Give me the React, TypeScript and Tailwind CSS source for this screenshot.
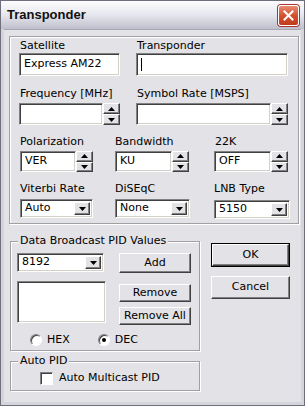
import React from 'react';

const font = { fontFamily: '"DejaVu Sans", Verdana, sans-serif' };

const sunken =
  'bg-white border border-t-[#808080] border-l-[#808080] border-r-white border-b-white shadow-[inset_1px_1px_0_#404040,inset_-1px_-1px_0_#d4d0c8]';
const raised =
  'bg-[#e3e2e6] border border-t-white border-l-white border-r-[#404040] border-b-[#404040] shadow-[inset_-1px_-1px_0_#808080]';
const etched = 'relative border border-[#a0a0a4] shadow-[inset_1px_1px_0_#fff,1px_1px_0_#fff]';

function Arrow({ up }: { up?: boolean }) {
  return (
    <svg width="7" height="4" viewBox="0 0 7 4">
      <polygon points={up ? '3.5,0 7,4 0,4' : '0,0 7,0 3.5,4'} fill="#000" />
    </svg>
  );
}

function Spinner() {
  return (
    <div className="flex flex-col w-[17px]">
      <div className={`${raised} flex-1 flex items-center justify-center`}>
        <Arrow up />
      </div>
      <div className={`${raised} flex-1 flex items-center justify-center`}>
        <Arrow />
      </div>
    </div>
  );
}

function SpinField({ w, h, value }: { w: string; h: string; value?: string }) {
  return (
    <div className={`flex ${h}`}>
      <div className={`${sunken} ${w} flex items-center pl-[4px]`}>{value}</div>
      <Spinner />
    </div>
  );
}

function Select({ w, h, value }: { w: string; h: string; value: string }) {
  return (
    <div className={`${sunken} ${w} ${h} flex items-center justify-between p-[2px] pl-[4px]`}>
      <span>{value}</span>
      <div className={`${raised} w-[16px] h-full flex items-center justify-center`}>
        <Arrow />
      </div>
    </div>
  );
}

function Label({ children, className = '' }: { children: React.ReactNode; className?: string }) {
  return <div className={`leading-[13px] h-[13px] whitespace-nowrap ${className}`}>{children}</div>;
}

function Button({ children, className = '' }: { children: React.ReactNode; className?: string }) {
  return (
    <div className={`${raised} flex items-center justify-center ${className}`}>{children}</div>
  );
}

function Radio({ checked, label }: { checked?: boolean; label: string }) {
  return (
    <div className="flex items-center gap-[5px]">
      <div className="w-[12px] h-[12px] rounded-full bg-white border border-t-[#808080] border-l-[#808080] border-r-white border-b-white shadow-[inset_1px_1px_0_#404040] flex items-center justify-center">
        {checked && <div className="w-[4px] h-[4px] rounded-full bg-black" />}
      </div>
      <span>{label}</span>
    </div>
  );
}

export default function App() {
  return (
    <div
      style={font}
      className="w-[305px] h-[406px] text-[11px] text-black bg-[#d4d4dc] border border-[#6f6f7c] flex flex-col overflow-hidden"
    >
      {/* Title bar */}
      <div className="h-[28px] shrink-0 flex items-center justify-between pl-[6px] pr-[5px] bg-gradient-to-b from-[#fdfdfe] via-[#e6e6ee] to-[#bfbfcc]">
        <span
          className="text-[13px] font-bold text-[#111]"
          style={{ fontFamily: '"Liberation Sans", Arial, sans-serif' }}
        >
          Transponder
        </span>
        <div className="w-[21px] h-[21px] rounded-[3px] border border-white bg-gradient-to-b from-[#e88a6f] via-[#d3512f] to-[#c13b1b] flex items-center justify-center shadow-[0_0_0_1px_#a33]">
          <svg width="11" height="11" viewBox="0 0 11 11">
            <path d="M1.5 1.5 L9.5 9.5 M9.5 1.5 L1.5 9.5" stroke="#fff" strokeWidth="2" strokeLinecap="square" />
          </svg>
        </div>
      </div>

      {/* Body */}
      <div className="flex-1 mx-[3px] mb-[3px] bg-[#e3e2e6] border-t border-[#a8a8b4] pl-[5px] pt-[6px]">
        {/* Main settings group */}
        <div className={`${etched} w-[290px] h-[188px] pl-[9px] pt-[2px]`}>
          <div className="flex gap-[16px]">
            <div>
              <Label className="pl-[1px]">Satellite</Label>
              <div className={`${sunken} w-[101px] h-[23px] mt-[1px] flex items-center pl-[4px]`}>
                Express AM22
              </div>
            </div>
            <div>
              <Label className="pl-[1px]">Transponder</Label>
              <div className={`${sunken} w-[152px] h-[23px] mt-[1px] flex items-center pl-[4px]`}>
                <div className="w-px h-[13px] bg-black" />
              </div>
            </div>
          </div>

          <div className="flex gap-[16px] mt-[11px]">
            <div>
              <Label className="pl-[1px]">Frequency [MHz]</Label>
              <div className="mt-[3px]">
                <SpinField w="w-[84px]" h="h-[22px]" />
              </div>
            </div>
            <div>
              <Label className="pl-[1px]">Symbol Rate [MSPS]</Label>
              <div className="mt-[3px]">
                <SpinField w="w-[135px]" h="h-[22px]" />
              </div>
            </div>
          </div>

          <div className="grid grid-cols-[95px_99px_75px] ml-[1px] mt-[10px]">
            <div>
              <Label>Polarization</Label>
              <div className="mt-[3px]">
                <SpinField w="w-[56px]" h="h-[21px]" value="VER" />
              </div>
            </div>
            <div>
              <Label>Bandwidth</Label>
              <div className="mt-[3px]">
                <SpinField w="w-[57px]" h="h-[21px]" value="KU" />
              </div>
            </div>
            <div>
              <Label className="pl-[1px]">22K</Label>
              <div className="mt-[3px]">
                <SpinField w="w-[57px]" h="h-[21px]" value="OFF" />
              </div>
            </div>

            <div className="mt-[10px]">
              <Label>Viterbi Rate</Label>
              <div className="mt-[4px]">
                <Select w="w-[73px]" h="h-[19px]" value="Auto" />
              </div>
            </div>
            <div className="mt-[10px]">
              <Label>DiSEqC</Label>
              <div className="mt-[4px]">
                <Select w="w-[75px]" h="h-[19px]" value="None" />
              </div>
            </div>
            <div className="mt-[10px]">
              <Label>LNB Type</Label>
              <div className="mt-[5px]">
                <Select w="w-[76px]" h="h-[19px]" value="5150" />
              </div>
            </div>
          </div>
        </div>

        {/* Bottom section */}
        <div className="flex mt-[17px] ml-[1px]">
          <div className="w-[190px]">
            <div className={`${etched} h-[110px] pl-[6px] pt-[11px]`}>
              <div className="absolute -top-[8px] left-[7px] px-[2px] bg-[#e3e2e6] leading-[13px]">
                Data Broadcast PID Values
              </div>
              <div className="flex gap-[13px]">
                <div>
                  <Select w="w-[87px]" h="h-[19px]" value="8192" />
                  <div className={`${sunken} w-[89px] h-[42px] mt-[9px]`} />
                </div>
                <div className="flex flex-col">
                  <Button className="w-[72px] h-[20px]">Add</Button>
                  <Button className="w-[72px] h-[18px] mt-[11px]">Remove</Button>
                  <Button className="w-[72px] h-[18px] mt-[5px]">Remove All</Button>
                </div>
              </div>
              <div className="flex gap-[28px] pl-[13px] mt-[7px]">
                <Radio label="HEX" />
                <Radio label="DEC" checked />
              </div>
            </div>

            <div className={`${etched} h-[30px] mt-[10px] pl-[29px] pt-[8px]`}>
              <div className="absolute -top-[8px] left-[7px] px-[2px] bg-[#e3e2e6] leading-[13px]">
                Auto PID
              </div>
              <div className="flex items-center gap-[6px]">
                <div className="w-[13px] h-[13px] bg-white border border-t-[#808080] border-l-[#808080] border-r-white border-b-white shadow-[inset_1px_1px_0_#404040]" />
                <span>Auto Multicast PID</span>
              </div>
            </div>
          </div>

          <div className="ml-[11px] pt-[2px] flex flex-col">
            <div className="border border-black">
              <Button className="w-[77px] h-[22px]">OK</Button>
            </div>
            <Button className="w-[79px] h-[23px] mt-[9px]">Cancel</Button>
          </div>
        </div>
      </div>
    </div>
  );
}
